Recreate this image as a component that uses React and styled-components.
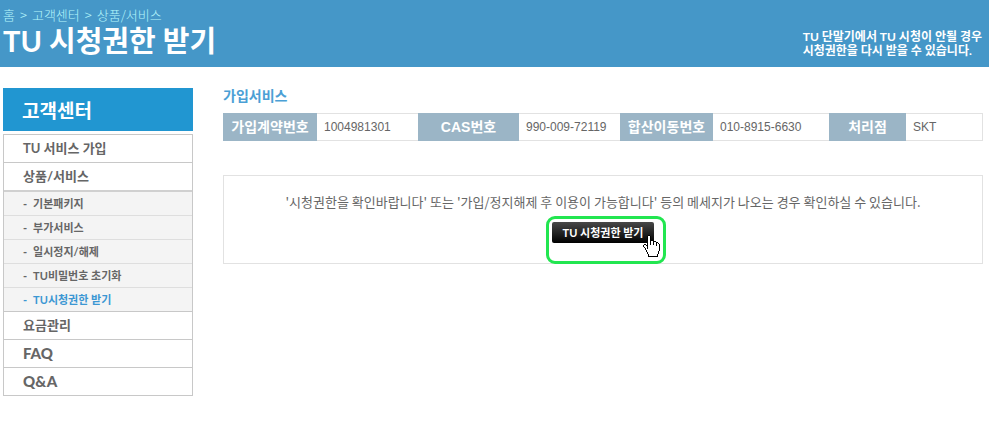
import styled, { createGlobalStyle } from "styled-components";

const GlobalStyle = createGlobalStyle`
  * {
    box-sizing: border-box;
  }

  body {
    margin: 0;
    background: #fff;
    color: #666;
    font-family: "Liberation Sans", "Noto Sans CJK KR", sans-serif;
    font-size: 12px;
  }

  a {
    color: inherit;
    text-decoration: none;
  }
`;

const Header = styled.header`
  display: flex;
  justify-content: space-between;
  align-items: flex-end;
  padding: 6px 7px 9px 3px;
  background: #4597c8;
  color: #fff;
`;

const Breadcrumb = styled.nav`
  display: flex;
  gap: 5px;
  color: #b5f6fb;
  font-family: "Noto Sans CJK KR", sans-serif;
  font-size: 13px;
  font-weight: 300;
  line-height: 18px;
`;

const PageTitle = styled.h1`
  margin: 0;
  font-family: Lato, "Noto Sans CJK KR", sans-serif;
  font-size: 29px;
  font-weight: 700;
  line-height: 34px;
`;

const HeaderNote = styled.p`
  margin: 0;
  font-family: Lato, "Noto Sans CJK KR", sans-serif;
  font-size: 12px;
  font-weight: 700;
  line-height: 14px;
`;

const Layout = styled.div`
  display: flex;
  align-items: flex-start;
  gap: 30px;
  padding: 21px 6px 0 3px;
`;

const Sidebar = styled.aside`
  flex: none;
  width: 190px;
`;

const SidebarTitle = styled.h2`
  margin: 0 0 3px;
  padding: 0 19px;
  background: #2196d1;
  color: #fff;
  font-family: "Noto Sans CJK KR", sans-serif;
  font-size: 19px;
  font-weight: 700;
  line-height: 43px;
`;

const Menu = styled.ul`
  margin: 0;
  padding: 0;
  list-style: none;
  border: 1px solid #c8c8c8;
  font-family: Lato, "Noto Sans CJK KR", sans-serif;
`;

const MenuItem = styled.li`
  & + & {
    border-top: 1px solid #c8c8c8;
  }

  > a {
    display: block;
    padding: 0 19px;
    font-size: ${({ $latin }) => ($latin ? "15px" : "13px")};
    font-weight: ${({ $latin }) => ($latin ? 900 : 700)};
    line-height: 27px;
  }
`;

const SubMenu = styled.ul`
  margin: 0;
  padding: 0;
  list-style: none;
  border-top: 2px solid #d0d0d0;
  background: #f4f4f4;
`;

const SubMenuItem = styled.li`
  & + & {
    border-top: 1px solid #dedede;
  }

  a {
    display: flex;
    gap: 6px;
    padding: 0 19px;
    color: ${({ $active }) => ($active ? "#3b97d3" : "#666")};
    font-size: 11px;
    font-weight: 700;
    line-height: 23px;
  }

  a::before {
    content: "-";
    font-weight: 900;
  }
`;

const Content = styled.main`
  flex: 1;
  min-width: 0;
`;

const SectionTitle = styled.h2`
  margin: 0 0 10px;
  color: #4b9fd5;
  font-family: "Noto Sans CJK KR", sans-serif;
  font-size: 14px;
  font-weight: 700;
  line-height: 15px;
`;

const InfoTable = styled.table`
  width: 100%;
  table-layout: fixed;
  border-spacing: 0;
`;

const Label = styled.th`
  padding: 0;
  background: #9bb5c6;
  color: #fff;
  font-family: "Liberation Sans", "Noto Sans CJK KR", sans-serif;
  font-size: 14px;
  font-weight: 700;
  line-height: 26px;
`;

const Value = styled.td`
  padding: 0 7px;
  border: solid #e2e2e2;
  border-width: 1px 0;
  font-family: "Liberation Sans", sans-serif;
  font-size: 12px;
  line-height: 26px;

  &:last-child {
    border-right-width: 1px;
  }
`;

const NoticeBox = styled.section`
  display: flex;
  flex-direction: column;
  align-items: center;
  margin-top: 34px;
  padding-top: 16px;
  border: 1px solid #e2e2e2;
`;

const Notice = styled.p`
  margin: 0 0 4px;
  font-family: "Noto Sans CJK KR", sans-serif;
  font-size: 13px;
  font-weight: 400;
  line-height: 20px;
  color: #666;
`;

/* the ring runs over the bottom border of the box */
const Highlight = styled.div`
  position: relative;
  margin: 0 0 -1px 6px;
  padding: 3px 9px 18px 3px;
  border: 3px solid #22e650;
  border-radius: 9px;
`;

const ActionButton = styled.button`
  display: block;
  height: 21px;
  padding: 0 11px;
  border: 0;
  border-radius: 2px;
  background: linear-gradient(#484848, #000);
  color: #fff;
  font-family: Lato, "Noto Sans CJK KR", sans-serif;
  font-size: 11px;
  font-weight: 700;
  line-height: 20px;
  cursor: pointer;
`;

const Pointer = styled.svg`
  position: absolute;
  right: 3px;
  bottom: 4px;
  pointer-events: none;
`;

const subMenu = ["기본패키지", "부가서비스", "일시정지/해제", "TU비밀번호 초기화", "TU시청권한 받기"];

const menu = [
  { label: "TU 서비스 가입" },
  { label: "상품/서비스", children: subMenu },
  { label: "요금관리" },
  { label: "FAQ", latin: true },
  { label: "Q&A", latin: true },
];

const HandPointer = () => (
  <Pointer width="17" height="22" viewBox="0 0 17 22" shapeRendering="crispEdges" aria-hidden="true">
    <path
      fill="#fff"
      d="M5 1h2v5h3v1h3v1h2v1h1v7h-1v3h-1v2H6v-2H5v-2H4v-2H3v-2H2v-1H1v-2h2v1h1v1h1z"
    />
    <path
      fill="#000"
      d="M5 0h2v1H5zM4 1h1v13H4zM7 1h1v9H7zM8 5h2v1H8zM10 6h1v4h-1zM11 6h2v1h-2zM13 7h1v4h-1zM14 7h1v1h-1zM15 8h1v1h-1zM16 9h1v7h-1zM15 16h1v3h-1zM14 19h1v2h-1zM5 21h10v1H5zM5 19h1v2H5zM4 17h1v2H4zM3 15h1v2H3zM2 13h1v2H2zM1 12h1v1H1zM0 10h1v2H0zM1 9h2v1H1zM3 10h1v1H3z"
    />
  </Pointer>
);

const App = () => {
  return (
    <>
      <GlobalStyle />
      <Header>
        <div>
          <Breadcrumb>
            <a href="#home">홈</a>
            <span>&gt;</span>
            <a href="#center">고객센터</a>
            <span>&gt;</span>
            <a href="#service">상품/서비스</a>
          </Breadcrumb>
          <PageTitle>TU 시청권한 받기</PageTitle>
        </div>
        <HeaderNote>
          TU 단말기에서 TU 시청이 안될 경우
          <br />
          시청권한을 다시 받을 수 있습니다.
        </HeaderNote>
      </Header>
      <Layout>
        <Sidebar>
          <SidebarTitle>고객센터</SidebarTitle>
          <Menu>
            {menu.map(({ label, latin, children }) => (
              <MenuItem key={label} $latin={latin}>
                <a href="#menu">{label}</a>
                {children && (
                  <SubMenu>
                    {children.map((item) => (
                      <SubMenuItem key={item} $active={item === "TU시청권한 받기"}>
                        <a href="#submenu">{item}</a>
                      </SubMenuItem>
                    ))}
                  </SubMenu>
                )}
              </MenuItem>
            ))}
          </Menu>
        </Sidebar>
        <Content>
          <SectionTitle>가입서비스</SectionTitle>
          <InfoTable>
            <colgroup>
              <col width="94" />
              <col width="101" />
              <col width="101" />
              <col width="101" />
              <col width="93" />
              <col width="116" />
              <col width="77" />
              <col width="77" />
            </colgroup>
            <tbody>
              <tr>
                <Label scope="row">가입계약번호</Label>
                <Value>1004981301</Value>
                <Label scope="row">CAS번호</Label>
                <Value>990-009-72119</Value>
                <Label scope="row">합산이동번호</Label>
                <Value>010-8915-6630</Value>
                <Label scope="row">처리점</Label>
                <Value>SKT</Value>
              </tr>
            </tbody>
          </InfoTable>
          <NoticeBox>
            <Notice>
              '시청권한을 확인바랍니다' 또는 '가입/정지해제 후 이용이 가능합니다' 등의 메세지가 나오는 경우 확인하실 수 있습니다.
            </Notice>
            <Highlight>
              <ActionButton type="button">TU 시청권한 받기</ActionButton>
              <HandPointer />
            </Highlight>
          </NoticeBox>
        </Content>
      </Layout>
    </>
  );
};

export default App;
